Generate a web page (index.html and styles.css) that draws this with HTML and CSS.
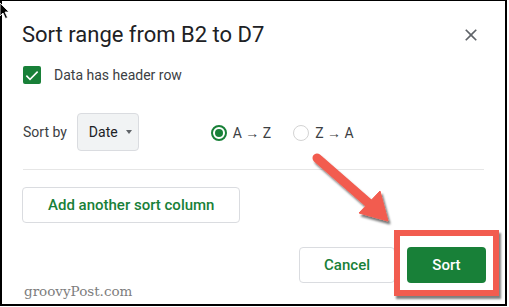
FILE: index.html
```html
<!DOCTYPE html>
<html>
<head>
    <title>Sort range</title>
    <link rel="stylesheet" href="styles.css">
</head>
<body>
    <div class="frame">
        <div class="dialog">
            <div class="header">
                <h1 class="title">Sort range from B2 to D7</h1>
                <button class="close" type="button">
                    <svg width="20" height="20" viewBox="0 0 24 24"><path d="M19 6.41L17.59 5 12 10.59 6.41 5 5 6.41 10.59 12 5 17.59 6.41 19 12 13.41 17.59 19 19 17.59 13.41 12z" fill="#5f6368"/></svg>
                </button>
            </div>

            <label class="check-row">
                <span class="checkbox">
                    <svg width="18" height="18" viewBox="0 0 18 18"><path d="M7 12.2L3.9 9.1 2.8 10.2 7 14.4l8.2-8.2-1.1-1.1z" fill="#fff"/></svg>
                </span>
                <span>Data has header row</span>
            </label>

            <div class="sort-row">
                <span class="sort-label">Sort by</span>
                <div class="select">
                    <span>Date</span>
                    <span class="caret"></span>
                </div>
                <div class="radios">
                    <label class="radio"><span class="radio-dot checked"></span>A → Z</label>
                    <label class="radio"><span class="radio-dot"></span>Z → A</label>
                </div>
            </div>

            <div class="divider"></div>

            <button class="btn btn-outline" type="button">Add another sort column</button>

            <div class="footer">
                <button class="btn btn-outline" type="button">Cancel</button>
                <button class="btn btn-primary" type="button">Sort</button>
            </div>
        </div>
    </div>

    <!-- anotações por cima da captura -->
    <svg class="arrow" width="509" height="307" viewBox="0 0 509 307">
        <defs>
            <filter id="sombra" x="-20%" y="-20%" width="140%" height="140%">
                <feDropShadow dx="2" dy="3" stdDeviation="1.2" flood-color="#000" flood-opacity="0.55"/>
            </filter>
        </defs>
        <g filter="url(#sombra)" fill="#f25c4f" stroke="#f25c4f">
            <line x1="317" y1="158" x2="372" y2="206" stroke-width="9" stroke-linecap="round"/>
            <polygon points="388,221 359,213 380,191" stroke-width="1" stroke-linejoin="round"/>
        </g>
    </svg>
    <div class="highlight"></div>
    <div class="watermark">groovyPost.com</div>
    <svg class="cursor" width="10" height="20" viewBox="0 0 10 20">
        <polygon points="0,3 0,16 3,13 5.5,18.5 7.5,17.5 5,12 9,12" fill="#000" stroke="#fff" stroke-width="0.8"/>
    </svg>
</body>
</html>
```

FILE: styles.css
```css
/* Reset */
body, h1, button, label {
    margin: 0;
    padding: 0;
    box-sizing: border-box;
}

body {
    position: relative;
    background-color: #fff;
    font-family: Roboto, "Liberation Sans", Arial, sans-serif;
    color: #3c4043;
    width: 509px;
    height: 307px;
    overflow: hidden;
}

/* Moldura preta da captura */
.frame {
    box-sizing: border-box;
    width: 507px;
    height: 306px;
    border-style: solid;
    border-color: #000;
    border-width: 1px 2px 2px 2px;
}

.dialog {
    padding: 20px 19px 0 20px;
}

/* Cabeçalho */
.header {
    display: flex;
    align-items: center;
    justify-content: space-between;
}

.title {
    font-size: 22px;
    line-height: 28px;
    font-weight: 400;
    color: #202124;
}

.close {
    display: flex;
    background: none;
    border: none;
    margin-right: 5px;
}

/* Checkbox */
.check-row {
    display: flex;
    align-items: center;
    gap: 13px;
    margin-top: 17px;
    margin-left: 1px;
    font-size: 14px;
    line-height: 18px;
}

.checkbox {
    display: flex;
    width: 18px;
    height: 18px;
    background-color: #188038;
    border-radius: 2px;
}

/* Linha de ordenação */
.sort-row {
    display: flex;
    align-items: center;
    margin-top: 29px;
    font-size: 14px;
}

.sort-label {
    margin-left: 1px;
    margin-right: 10px;
}

.select {
    display: flex;
    align-items: center;
    gap: 8px;
    height: 38px;
    box-sizing: border-box;
    padding: 0 6px 0 11px;
    background-color: #f1f3f4;
    border: 1px solid #dadce0;
    border-radius: 4px;
    color: #202124;
}

.caret {
    width: 0;
    height: 0;
    border-left: 3.5px solid transparent;
    border-right: 3.5px solid transparent;
    border-top: 4px solid #5f6368;
}

.radios {
    display: flex;
    gap: 22px;
    margin-left: 72px;
}

.radio {
    display: flex;
    align-items: center;
    gap: 6px;
    margin-top: 2px;
}

.radio-dot {
    position: relative;
    width: 16px;
    height: 16px;
    box-sizing: border-box;
    border: 1.5px solid #d3d3d3;
    border-radius: 50%;
}

.radio-dot.checked {
    border: 2px solid #188038;
}

.radio-dot.checked::after {
    content: "";
    position: absolute;
    top: 2px;
    left: 2px;
    width: 8px;
    height: 8px;
    border-radius: 50%;
    background-color: #188038;
}

.divider {
    height: 1px;
    background-color: #e6e6e6;
    margin: 18px 2px 0 1px;
}

/* Botões */
.btn {
    height: 36px;
    padding: 0 24px;
    border-radius: 4px;
    font-family: Roboto, "Liberation Sans", Arial, sans-serif;
    font-size: 15px;
    font-weight: 500;
    cursor: pointer;
}

.btn-outline {
    background-color: #fff;
    border: 1px solid #dadce0;
    color: #188038;
}

.dialog > .btn-outline {
    margin-top: 17px;
    padding: 0 25px;
}

.footer {
    display: flex;
    justify-content: flex-end;
    gap: 12px;
    margin-top: 24px;
}

.btn-primary {
    width: 79px;
    background-color: #188038;
    border: none;
    color: #fff;
}

/* Anotações */
.arrow {
    position: absolute;
    left: 0;
    top: 0;
}

.highlight {
    position: absolute;
    left: 394px;
    top: 230px;
    width: 105px;
    height: 66px;
    box-sizing: border-box;
    border: 6px solid #f25c4f;
    box-shadow: 2px 3px 2px rgba(0, 0, 0, 0.5);
}

.watermark {
    position: absolute;
    left: 24px;
    top: 283px;
    font-family: "DejaVu Serif", serif;
    font-size: 13.5px;
    color: #7d7d7d;
}

.cursor {
    position: absolute;
    left: 0;
    top: 0;
}
```
